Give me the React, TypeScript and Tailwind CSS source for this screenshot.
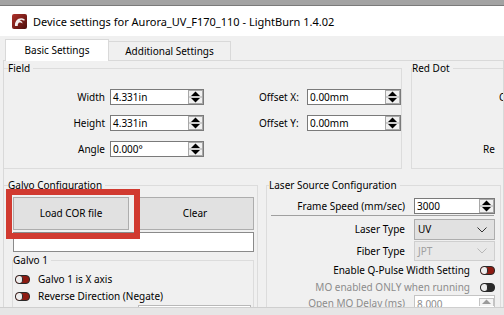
import React from "react";

function SpinArrows({ disabled }: { disabled?: boolean }) {
  const c = disabled ? "#9a9a9a" : "#000";
  return (
    <svg width="15" height="14" viewBox="0 0 15 14" className="shrink-0">
      <rect x="0.5" y="0.5" width="14" height="13" fill={disabled ? "#f4f4f4" : "#f0f0f0"} stroke="#a8a8a8" />
      <line x1="1" y1="7" x2="14" y2="7" stroke="#a8a8a8" />
      <polygon points="3,6 12,6 7.5,1.5" fill={c} />
      {!disabled && <polygon points="3,8 12,8 7.5,12.5" fill={c} />}
    </svg>
  );
}

function SpinBox({ value, className, textClass }: { value: string; className: string; textClass?: string }) {
  return (
    <div className={className}>
      <span className={textClass ?? "flex-1 pl-[2px] leading-none"}>{value}</span>
      <SpinArrows />
    </div>
  );
}

function Chevron({ color }: { color: string }) {
  return (
    <svg width="10" height="6" viewBox="0 0 10 6" className="shrink-0">
      <polyline points="0.5,0.5 5,5 9.5,0.5" fill="none" stroke={color} strokeWidth="1" />
    </svg>
  );
}

function Toggle({ dark }: { dark?: boolean }) {
  return (
    <div
      className={
        dark
          ? "flex w-[15px] h-[9px] rounded-[4px] border border-[#2a2a2a] bg-[#2a2a2a] overflow-hidden shrink-0"
          : "flex w-[15px] h-[9px] rounded-[4px] border border-[#2a2a2a] bg-[#8e1b12] overflow-hidden shrink-0"
      }
    >
      <div className="w-[7px] h-full rounded-[3px] bg-[#ededed] border-r border-[#2a2a2a]" />
    </div>
  );
}

function Logo() {
  return (
    <svg width="15" height="15" viewBox="0 0 15 15" className="shrink-0">
      <defs>
        <linearGradient id="lg" x1="0" y1="0" x2="1" y2="1">
          <stop offset="0" stopColor="#b0322a" />
          <stop offset="1" stopColor="#4a0c0a" />
        </linearGradient>
      </defs>
      <rect x="0" y="0" width="15" height="15" rx="2" fill="url(#lg)" />
      <path d="M3 12 C2.5 7.5 5.5 4 9.5 4.2 C11.5 4.3 12.8 5.2 13 6.2 L11.2 6.4 C10.2 5.6 8.6 5.6 7.6 6.4 C9.2 6.6 10.6 7.6 10.4 9.4 C9.4 8.4 8 8.2 6.8 8.8 C6 9.6 5.6 10.8 5.8 12 Z" fill="#f4eeee" />
    </svg>
  );
}

export default function App() {
  return (
    <div className="w-[504px] h-[315px] overflow-hidden bg-[#f0f0f0] flex flex-col text-[10px] text-black font-['Noto_Sans',sans-serif]">
      <div className="h-[5px] shrink-0 bg-[#a3a3a3]" />
      <div className="h-[31px] shrink-0 bg-white border-t border-[#7a7a7a] flex items-center pl-[12px]">
        <Logo />
        <span className="ml-[6px] text-[11px] leading-none">Device settings for Aurora_UV_F170_110 - LightBurn 1.4.02</span>
      </div>
      <div className="h-[24px] shrink-0 flex items-end pl-[5px] relative z-10">
        <div className="h-[22px] -mb-px w-[104px] bg-white border border-b-0 border-[#d9d9d9] flex items-center justify-center">
          Basic Settings
        </div>
        <div className="h-[19px] w-[122px] bg-[#f0f0f0] border border-b-0 border-l-0 border-[#d9d9d9] flex items-center justify-center">
          Additional Settings
        </div>
      </div>
      <div className="h-[247px] shrink-0 ml-[3px] border-t border-l border-r border-[#d9d9d9] flex flex-col overflow-hidden">
        {/* Row 1 */}
        <div className="flex mt-[7px] shrink-0">
          <div className="w-[400px] h-[101px] border border-l-0 border-[#dcdcdc] flex flex-col">
            <div className="-mt-[8px] ml-[4px] w-fit h-[14px] leading-[14px] bg-[#f0f0f0] pr-[3px]">Field</div>
            <div className="mt-[14px] flex flex-col gap-[10px]">
              <div className="flex items-center h-[16px]">
                <div className="w-[101px] text-right">Width</div>
                <SpinBox value="4.331in" className="ml-[5px] w-[94px] h-[16px] bg-white border border-[#7a7a7a] flex items-center" />
                <div className="ml-[55px] w-[48px]">Offset X:</div>
                <SpinBox value="0.00mm" className="w-[94px] h-[16px] bg-white border border-[#7a7a7a] flex items-center" />
              </div>
              <div className="flex items-center h-[16px]">
                <div className="w-[101px] text-right">Height</div>
                <SpinBox value="4.331in" className="ml-[5px] w-[94px] h-[16px] bg-white border border-[#7a7a7a] flex items-center" />
                <div className="ml-[55px] w-[48px]">Offset Y:</div>
                <SpinBox value="0.00mm" className="w-[94px] h-[16px] bg-white border border-[#7a7a7a] flex items-center" />
              </div>
              <div className="flex items-center h-[16px]">
                <div className="w-[101px] text-right">Angle</div>
                <SpinBox value="0.000°" className="ml-[5px] w-[94px] h-[16px] bg-white border border-[#7a7a7a] flex items-center" />
              </div>
            </div>
          </div>
          <div className="ml-[9px] flex-1 h-[101px] border border-r-0 border-[#dcdcdc] flex flex-col">
            <div className="-mt-[8px] w-fit h-[14px] leading-[14px] bg-[#f0f0f0] pr-[3px] whitespace-nowrap">Red Dot</div>
            <div className="mt-[14px] flex flex-col gap-[10px] overflow-hidden">
              <div className="h-[16px] flex items-center pl-[87px] whitespace-nowrap">C</div>
              <div className="h-[16px]" />
              <div className="h-[16px] flex items-center pl-[71px] whitespace-nowrap">Re</div>
            </div>
          </div>
        </div>
        {/* Row 2 */}
        <div className="flex mt-[16px] shrink-0">
          <div className="relative w-[254px] h-[200px] border border-l-0 border-[#dcdcdc] flex flex-col">
            <div className="-mt-[8px] ml-[4px] w-fit h-[14px] leading-[14px] bg-[#f0f0f0] pr-[3px]">Galvo Configuration</div>
            <div className="mt-[5px] ml-[9px] flex">
              <div className="w-[116px] h-[33px] bg-[#e1e1e1] border border-[#adadad] flex items-center justify-center">Load COR file</div>
              <div className="ml-[7px] w-[118px] h-[33px] bg-[#e1e1e1] border border-[#adadad] flex items-center justify-center">Clear</div>
            </div>
            <div className="mt-[2px] ml-[9px] w-[241px] h-[20px] bg-white border border-[#8a8a8a]" />
            <div className="mt-[8px] ml-[8px] w-[242px] h-[80px] border border-[#dcdcdc] flex flex-col">
              <div className="-mt-[8px] w-fit h-[14px] leading-[14px] bg-[#f0f0f0] pr-[3px]">Galvo 1</div>
              <div className="mt-[4px] h-[17px] flex items-center">
                <div className="ml-[2px]"><Toggle /></div>
                <span className="ml-[8px]">Galvo 1 is X axis</span>
              </div>
              <div className="h-[17px] flex items-center">
                <div className="ml-[2px]"><Toggle /></div>
                <span className="ml-[8px]">Reverse Direction (Negate)</span>
              </div>
              <div className="ml-[125px] w-[113px] h-[20px] bg-white border border-[#b8b8b8]" />
            </div>
            <div className="absolute left-[2px] top-[3px] w-[134px] h-[50px] border-[6px] border-[#d13a30]" />
          </div>
          <div className="ml-[8px] w-[235px] h-[200px] border border-[#dcdcdc] flex flex-col">
            <div className="-mt-[8px] ml-[2px] w-fit h-[14px] leading-[14px] bg-[#f0f0f0] pr-[3px]">Laser Source Configuration</div>
            <div className="mt-[6px] flex items-center h-[16px]">
              <div className="w-[138px] text-right">Frame Speed (mm/sec)</div>
              <SpinBox value="3000" className="ml-[9px] w-[81px] h-[16px] bg-white border border-[#7a7a7a] flex items-center" />
            </div>
            <div className="mt-[1px] ml-[4px] w-[223px] h-px bg-[#a0a0a0]" />
            <div className="mt-[3px] flex items-center h-[21px]">
              <div className="w-[138px] text-right">Laser Type</div>
              <div className="ml-[9px] w-[81px] h-[21px] bg-[#e1e1e1] border border-[#adadad] flex items-center pl-[3px] pr-[7px]">
                <span className="flex-1">UV</span>
                <Chevron color="#333" />
              </div>
            </div>
            <div className="mt-[1px] flex items-center h-[20px]">
              <div className="w-[138px] text-right">Fiber Type</div>
              <div className="ml-[9px] w-[81px] h-[20px] bg-[#e8e8e8] border border-[#cfcfcf] flex items-center pl-[3px] pr-[7px] text-[#a0a0a0]">
                <span className="flex-1">JPT</span>
                <Chevron color="#b8b8b8" />
              </div>
            </div>
            <div className="mt-[1px] flex items-center h-[17px]">
              <div className="w-[203px] text-right">Enable Q-Pulse Width Setting</div>
              <div className="ml-[10px]"><Toggle /></div>
            </div>
            <div className="flex items-center h-[16px]">
              <div className="w-[203px] text-right text-[#8c8c8c]">MO enabled ONLY when running</div>
              <div className="ml-[10px]"><Toggle dark /></div>
            </div>
            <div className="flex items-start h-[20px]">
              <div className="w-[138px] text-right text-[#8c8c8c] mt-[1px] leading-[14px]">Open MO Delay (ms)</div>
              <div className="ml-[9px] w-[81px] h-[20px] bg-white border border-[#c4c4c4] flex items-start pt-[2px]">
                <span className="flex-1 pl-[2px] text-[#8c8c8c] leading-[12px]">8.000</span>
                <svg width="15" height="8" viewBox="0 0 15 8" className="shrink-0">
                  <rect x="0.5" y="0.5" width="14" height="8" fill="#f4f4f4" stroke="#c4c4c4" />
                  <polygon points="3,6 12,6 7.5,1.5" fill="#9a9a9a" />
                </svg>
              </div>
            </div>
          </div>
        </div>
      </div>
      <div className="flex-1 bg-[#e6e6e6] border-t border-[#cfcfcf]" />
    </div>
  );
}
